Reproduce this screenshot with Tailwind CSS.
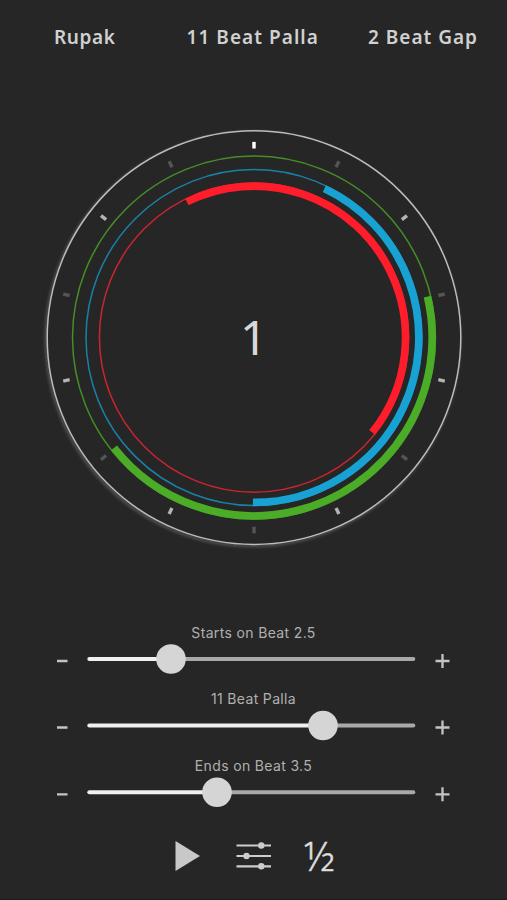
<!DOCTYPE html>
<html lang="en">
<head>
<meta charset="utf-8">
<title>Rupak</title>
<script src="https://cdn.jsdelivr.net/npm/@tailwindcss/browser@4"></script>
</head>
<body class="bg-[#262626]">
<main class="flex h-[900px] w-[507px] flex-col overflow-hidden border-b border-[#1f1e1f] bg-[#262626] font-['Inter',sans-serif] text-[#d0d0d0]">
  <header class="flex h-[75px] items-center justify-between pr-[29px] pl-[54px] font-['Noto_Sans',sans-serif] text-[19px] font-semibold whitespace-nowrap">
    <span class="tracking-[0.6px]">Rupak</span>
    <span class="ml-[22px] tracking-[1.05px]">11 Beat Palla</span>
    <span class="tracking-[1px]">2 Beat Gap</span>
  </header>

  <section class="h-[539px]">
    <svg class="block" width="507" height="539" viewBox="0 75 507 539" fill="none">
      <defs>
        <filter id="glow" x="-10%" y="-10%" width="120%" height="120%"><feGaussianBlur stdDeviation="1.8"/></filter>
        <rect id="tick" x="-1.7" y="-195.7" width="3.4" height="6.6"/>
      </defs>
      <g transform="translate(254 337.6)">
        <circle cx="-1.3" cy="1.6" r="206.6" stroke="#999" stroke-opacity=".45" stroke-width="2.5" filter="url(#glow)"/>
        <circle r="206.8" fill="#262626" stroke="#bcbcbc" stroke-width="1.5"/>
        <circle r="181.5" stroke="#458f26" stroke-width="1.5"/>
        <circle r="168" stroke="#1b80a6" stroke-width="1.5"/>
        <circle r="154.6" stroke="#cc2431" stroke-width="1.5"/>
        <circle r="178.2" stroke="#4bac27" stroke-width="7.6" pathLength="14" stroke-dasharray="6.03 7.97" transform="rotate(-13.3)"/>
        <circle r="164.8" stroke="#18a2d4" stroke-width="7.6" pathLength="14" stroke-dasharray="6.03 7.97" transform="rotate(-64.7)"/>
        <circle r="151.5" stroke="#ff1c2b" stroke-width="7.6" pathLength="14" stroke-dasharray="6.03 7.97" transform="rotate(-116.3)"/>
        <use href="#tick" fill="#fff"/>
        <g fill="#b4b4b4">
          <use href="#tick" transform="rotate(51.43)"/>
          <use href="#tick" transform="rotate(102.86)"/>
          <use href="#tick" transform="rotate(154.29)"/>
          <use href="#tick" transform="rotate(205.71)"/>
          <use href="#tick" transform="rotate(257.14)"/>
          <use href="#tick" transform="rotate(308.57)"/>
        </g>
        <g fill="#555">
          <use href="#tick" transform="rotate(25.71)"/>
          <use href="#tick" transform="rotate(77.14)"/>
          <use href="#tick" transform="rotate(128.57)"/>
          <use href="#tick" transform="rotate(180)"/>
          <use href="#tick" transform="rotate(231.43)"/>
          <use href="#tick" transform="rotate(282.86)"/>
          <use href="#tick" transform="rotate(334.29)"/>
        </g>
        <text class="font-['Noto_Sans',sans-serif] text-[48px]" x="-14" y="17.6" fill="#d8d8d8">1</text>
      </g>
    </svg>
  </section>

  <section class="flex flex-col">
    <div class="h-[66.5px] pt-[9px]">
      <p class="text-center text-[14px] leading-[20px] tracking-[0.35px] text-[#b0b0b0]">Starts on Beat 2.5</p>
      <svg class="block" width="507" height="32" viewBox="0 0 507 32">
        <path d="M57 18h10.500M435.500 18h14M442.500 11v14" stroke="#c4c4c4" stroke-width="2.300"/>
        <path d="M171 16H413.300" stroke="#a9a9a9" stroke-width="4" stroke-linecap="round"/>
        <path d="M89.300 16H171" stroke="#f0f0f0" stroke-width="4" stroke-linecap="round"/>
        <circle cx="171" cy="16" r="14.800" fill="#d5d5d5"/>
      </svg>
    </div>
    <div class="h-[66.5px] pt-[8.4px]">
      <p class="text-center text-[14px] leading-[20px] tracking-[0.35px] text-[#b0b0b0]">11 Beat Palla</p>
      <svg class="block" width="507" height="32" viewBox="0 0 507 32">
        <g transform="translate(0 .5)">
          <path d="M57 18h10.500M435.500 18h14M442.500 11v14" stroke="#c4c4c4" stroke-width="2.300"/>
          <path d="M323 16H413.300" stroke="#a9a9a9" stroke-width="4" stroke-linecap="round"/>
          <path d="M89.300 16H323" stroke="#f0f0f0" stroke-width="4" stroke-linecap="round"/>
          <circle cx="323" cy="16" r="14.800" fill="#d5d5d5"/>
        </g>
      </svg>
    </div>
    <div class="h-[66.5px] pt-[9px]">
      <p class="text-center text-[14px] leading-[20px] tracking-[0.35px] text-[#b0b0b0]">Ends on Beat 3.5</p>
      <svg class="block" width="507" height="32" viewBox="0 0 507 32">
        <g transform="translate(0 .3)">
          <path d="M57 18h10.500M435.500 18h14M442.500 11v14" stroke="#c4c4c4" stroke-width="2.300"/>
          <path d="M217 16H413.300" stroke="#a9a9a9" stroke-width="4" stroke-linecap="round"/>
          <path d="M89.300 16H217" stroke="#f0f0f0" stroke-width="4" stroke-linecap="round"/>
          <circle cx="217" cy="16" r="14.800" fill="#d5d5d5"/>
        </g>
      </svg>
    </div>
  </section>

  <footer class="flex h-[84px] items-center pl-[175px]">
    <svg width="26" height="32" viewBox="0 0 26 32"><path d="M.5 1 25 16 .5 31Z" fill="#c8c8c8"/></svg>
    <svg class="ml-[35px]" width="36" height="32" viewBox="0 0 36 32" fill="#cdcdcd">
      <path d="M.5 5.500h34.500M.5 16h34.500M.5 26.300h34.500" stroke="#cdcdcd" stroke-width="2.200"/>
      <circle cx="25.300" cy="5.500" r="3.200"/><circle cx="10.500" cy="16" r="3.200"/><circle cx="25.300" cy="26.300" r="3.200"/>
    </svg>
    <span class="ml-[32px] font-['Noto_Sans',sans-serif] text-[40px] leading-[40px] font-light text-[#dedede] [-webkit-text-stroke:0.5px_#dedede]">½</span>
  </footer>
</main>
</body>
</html>
